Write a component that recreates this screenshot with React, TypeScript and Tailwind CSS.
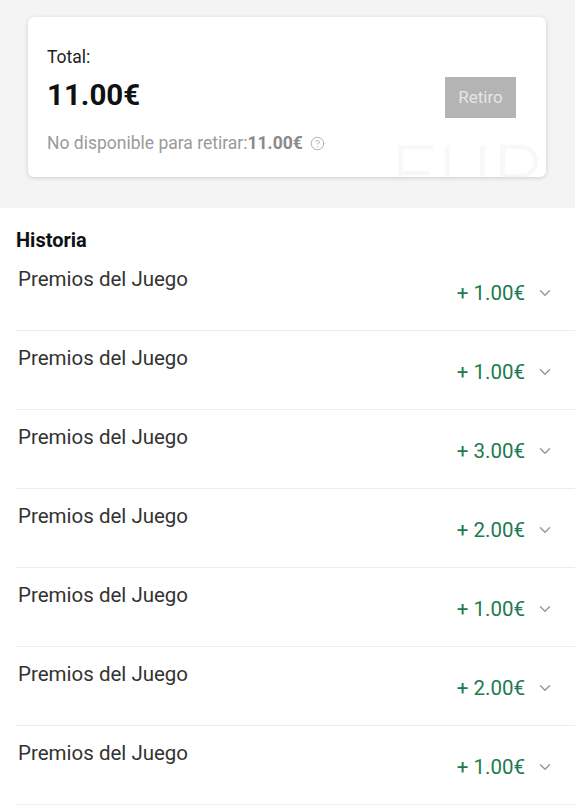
import { ChevronDown, CircleHelp } from 'lucide-react';

const history = ['1.00', '1.00', '3.00', '2.00', '1.00', '2.00', '1.00'];

export default function App() {
  return (
    <div className="min-h-screen bg-white" style={{ fontFamily: 'Roboto, "Noto Sans", sans-serif' }}>
      {/* balance card */}
      <div className="bg-[#f4f4f4] pl-[28px] pr-[29px] pt-[17px] pb-[31px]">
        <div className="relative h-[160px] overflow-hidden rounded-md bg-white pl-[19px] pr-[30px] pt-[28px] shadow-[0_1px_4px_rgba(0,0,0,0.16)]">
          <span aria-hidden className="pointer-events-none absolute right-[0px] top-[118px] text-[80px] font-light leading-none tracking-wide text-[#f8f8f8]">
            EUR
          </span>
          <div className="relative">
            <div className="text-[17.5px] leading-6 text-[#222]">Total:</div>
            <div className="mt-[3px] flex items-center justify-between">
              <span className="text-[29.5px] font-bold leading-[38px] text-[#111]">11.00€</span>
              <button className="mt-[5px] h-[41px] w-[71px] bg-[#b4b4b4] text-[17px] text-[#e6e6e6]">Retiro</button>
            </div>
            <div className="mt-[13px] flex items-center gap-[7px] text-[17.5px] leading-6 text-[#9a9a9a]">
              <span>
                No disponible para retirar:<span className="font-bold text-[#8a8a8a]">11.00€</span>
              </span>
              <CircleHelp size={15} strokeWidth={1.4} className="text-[#a8a8a8]" />
            </div>
          </div>
        </div>
      </div>

      {/* history list */}
      <div className="pl-[16px] pt-[20px] text-[20px] font-bold leading-6 text-[#111]">Historia</div>
      <div className="pl-[16px]">
        {history.map((amount, i) => (
          <div key={i} className="flex h-[79px] items-start justify-between border-b border-[#ececec] pl-[2px] pr-[21px]">
            <span className="pt-[15px] text-[20.5px] leading-6 text-[#333]">Premios del Juego</span>
            <div className="flex items-center gap-[11px] pt-[29px]">
              <span className="text-[20.5px] leading-6 text-[#217a4e]">+ {amount}€</span>
              <ChevronDown size={18} strokeWidth={2} className="text-[#9a9a9a]" />
            </div>
          </div>
        ))}
      </div>
    </div>
  );
}
